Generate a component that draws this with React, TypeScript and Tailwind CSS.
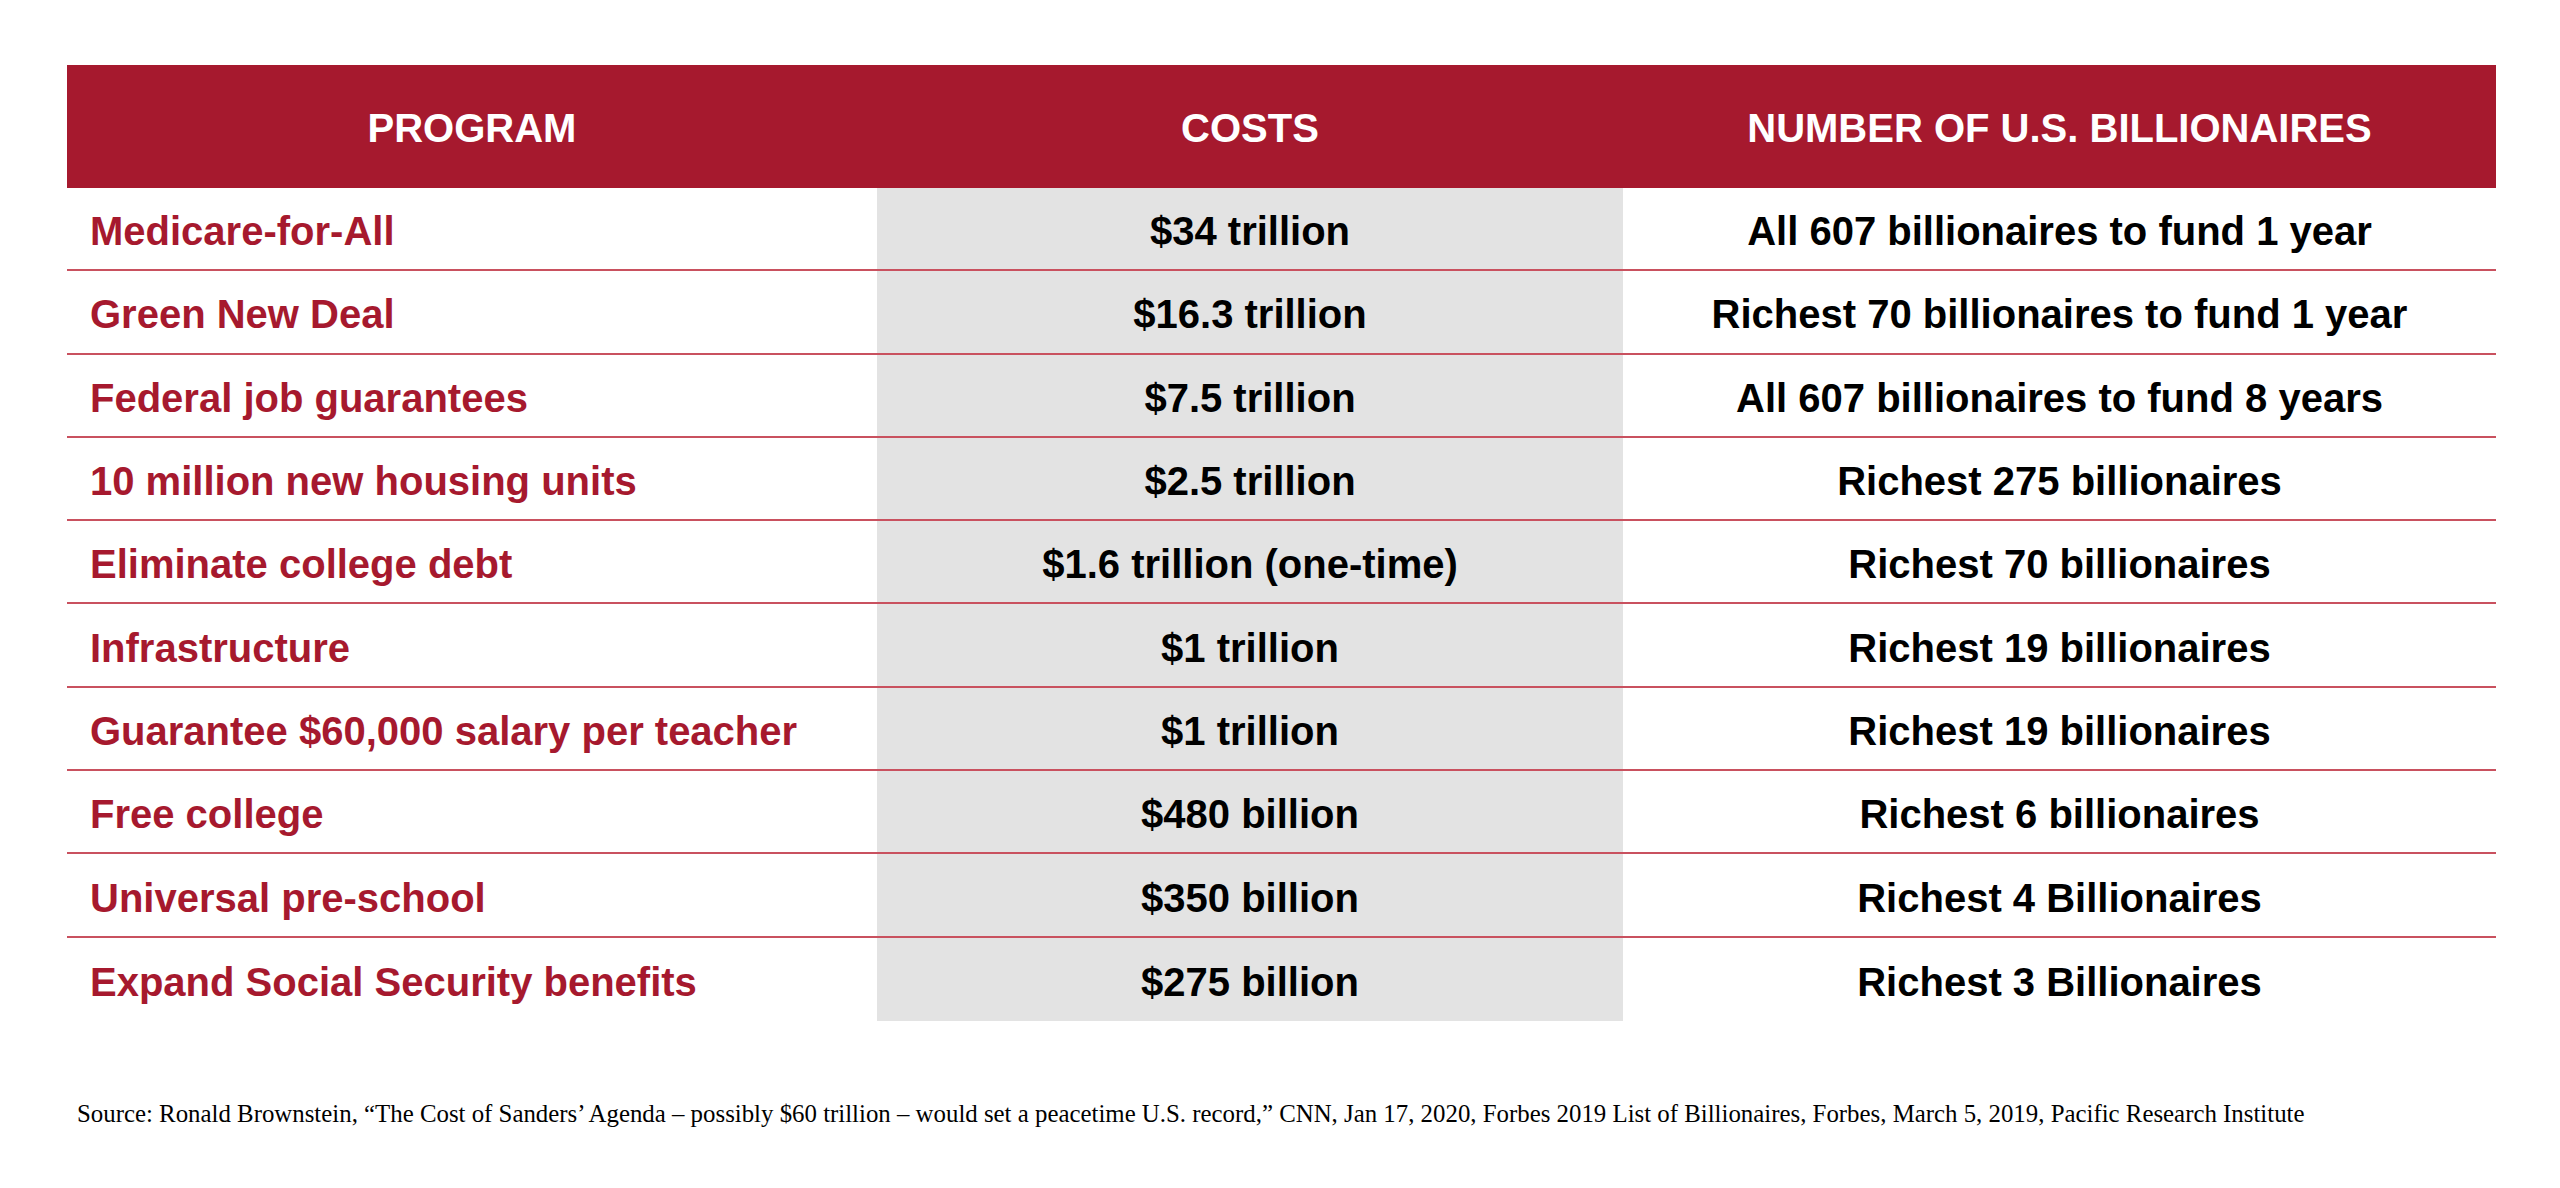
const rows = [
  ["Medicare-for-All", "$34 trillion", "All 607 billionaires to fund 1 year"],
  ["Green New Deal", "$16.3 trillion", "Richest 70 billionaires to fund 1 year"],
  ["Federal job guarantees", "$7.5 trillion", "All 607 billionaires to fund 8 years"],
  ["10 million new housing units", "$2.5 trillion", "Richest 275 billionaires"],
  ["Eliminate college debt", "$1.6 trillion (one-time)", "Richest 70 billionaires"],
  ["Infrastructure", "$1 trillion", "Richest 19 billionaires"],
  ["Guarantee $60,000 salary per teacher", "$1 trillion", "Richest 19 billionaires"],
  ["Free college", "$480 billion", "Richest 6 billionaires"],
  ["Universal pre-school", "$350 billion", "Richest 4 Billionaires"],
  ["Expand Social Security benefits", "$275 billion", "Richest 3 Billionaires"],
];

export default function App() {
  return (
    <div className="h-[1188px] w-full bg-white pl-[67px] pt-[65px] font-['Liberation_Sans',Arial,sans-serif]">
      <div className="w-[2429px]">
        <div className="grid h-[123px] grid-cols-[810px_746px_873px] items-center bg-[#a6192e] pt-[3px] text-center text-[40px] font-bold text-white">
          <div>PROGRAM</div>
          <div>COSTS</div>
          <div>NUMBER OF U.S. BILLIONAIRES</div>
        </div>

        {rows.map(([program, cost, who], i) => {
          const last = i === rows.length - 1;
          return (
            <div
              key={program}
              className={`grid h-[83.3px] grid-cols-[810px_746px_873px] text-[40px] font-bold ${
                last ? "" : "border-b-2 border-[#c9515f]"
              }`}
            >
              <div className="flex items-center pl-[23px] pt-[5px] text-[#a6192e]">{program}</div>
              <div className="flex items-center justify-center bg-[#e3e3e3] pt-[5px] text-black">{cost}</div>
              <div className="flex items-center justify-center pt-[5px] text-black">{who}</div>
            </div>
          );
        })}
      </div>

      <p className="mt-[78px] pl-[10px] font-['Liberation_Serif','Times_New_Roman',serif] text-[24.85px] leading-[30px] text-black">
        Source: Ronald Brownstein, “The Cost of Sanders’ Agenda – possibly $60 trillion – would set a peacetime U.S.
        record,” CNN, Jan 17, 2020, Forbes 2019 List of Billionaires, Forbes, March 5, 2019, Pacific Research Institute
      </p>
    </div>
  );
}
